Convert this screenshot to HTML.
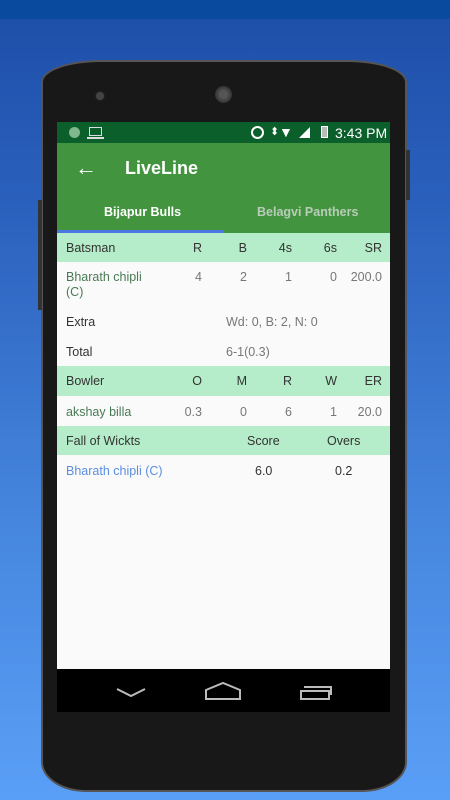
<!DOCTYPE html>
<html><head><style>
*{margin:0;padding:0;box-sizing:border-box}
body{width:450px;height:800px;overflow:hidden;position:relative;font-family:"Liberation Sans",sans-serif;background:linear-gradient(#1d4ea8 0px,#2a60bd 200px,#4484dd 500px,#5a9ff7 800px)}
.top{position:absolute;left:0;top:0;width:450px;height:19px;background:#0a4a9e}
.phone{position:absolute;left:41px;top:60px;width:366px;height:732px;background:#181818;border:2px solid #555;border-radius:60px 60px 45px 45px/22px 22px 30px 30px}
.screen{position:absolute;left:57px;top:122px;width:333px;height:590px;background:#fafafa;overflow:hidden}
.abs{position:absolute}
.row{position:absolute;left:0;width:333px;font-size:12.5px;color:#333}
.hd{background:#b5ecc9}
.g{color:#4a7a55}
.c{position:absolute;text-align:right}
</style></head><body>
<div class="top"></div>
<div class="phone"></div>
<div class="abs" style="left:95px;top:91px;width:10px;height:10px;border-radius:50%;background:#444;border:1px solid #222"></div>
<div class="abs" style="left:215px;top:86px;width:17px;height:17px;border-radius:50%;background:radial-gradient(#555 30%,#333 70%)"></div>
<div class="abs" style="left:406px;top:150px;width:4px;height:50px;background:#333"></div>
<div class="abs" style="left:38px;top:200px;width:4px;height:110px;background:#333"></div>
<div class="screen">
 <div class="abs" style="left:0;top:0;width:333px;height:21px;background:#0b5f2a"></div>
 <div class="abs" style="left:12px;top:5px;width:11px;height:11px;border-radius:50%;background:#7fb88a"></div>
 <div class="abs" style="left:32px;top:5px;width:13px;height:9px;border:1.5px solid #ddd"></div>
 <div class="abs" style="left:30px;top:15px;width:17px;height:1.5px;background:#ddd"></div>
 <div class="abs" style="left:194px;top:4px;width:13px;height:13px;border-radius:50%;border:2px solid #fff"></div>
 <div class="abs" style="left:213px;top:3px;color:#fff;font-size:11px">⬍</div>
 <div class="abs" style="left:222px;top:2px;color:#fff;font-size:14px">▼</div>
 <div class="abs" style="left:242px;top:5px;width:0;height:0;border-left:11px solid transparent;border-bottom:11px solid #fff"></div>
 <div class="abs" style="left:264px;top:4px;width:7px;height:12px;background:#bbb;border:1px solid #fff"></div>
 <div class="abs" style="left:278px;top:3px;color:#fff;font-size:14px">3:43 PM</div>
 <div class="abs" style="left:0;top:21px;width:333px;height:91px;background:#43943f"></div>
 <div class="abs" style="left:18px;top:33px;color:#fff;font-size:22px">←</div>
 <div class="abs" style="left:68px;top:36px;color:#fff;font-size:18px;font-weight:bold">LiveLine</div>
 <div class="abs" style="left:47px;top:83px;color:#fff;font-size:12.5px;font-weight:bold">Bijapur Bulls</div>
 <div class="abs" style="left:200px;top:83px;color:#b9ccb9;font-size:12.5px;font-weight:bold">Belagvi Panthers</div>
 <div class="abs" style="left:0;top:108px;width:167px;height:3px;background:#4a78e0"></div>

 <div class="row hd" style="top:111px;height:29px"><span class="abs" style="left:9px;top:8px">Batsman</span><span class="c" style="right:188px;top:8px">R</span><span class="c" style="right:143px;top:8px">B</span><span class="c" style="right:98px;top:8px">4s</span><span class="c" style="right:53px;top:8px">6s</span><span class="c" style="right:8px;top:8px">SR</span></div>
 <div class="row" style="top:140px;height:44px;color:#777"><span class="abs g" style="left:9px;top:8px;line-height:15px">Bharath chipli<br>(C)</span><span class="c" style="right:188px;top:8px">4</span><span class="c" style="right:143px;top:8px">2</span><span class="c" style="right:98px;top:8px">1</span><span class="c" style="right:53px;top:8px">0</span><span class="c" style="right:8px;top:8px">200.0</span></div>
 <div class="row" style="top:184px;height:30px"><span class="abs" style="left:9px;top:9px">Extra</span><span class="abs" style="left:169px;top:9px;color:#777">Wd: 0, B: 2, N: 0</span></div>
 <div class="row" style="top:214px;height:30px"><span class="abs" style="left:9px;top:9px">Total</span><span class="abs" style="left:169px;top:9px;color:#777">6-1(0.3)</span></div>
 <div class="row hd" style="top:244px;height:30px"><span class="abs" style="left:9px;top:8px">Bowler</span><span class="c" style="right:188px;top:8px">O</span><span class="c" style="right:143px;top:8px">M</span><span class="c" style="right:98px;top:8px">R</span><span class="c" style="right:53px;top:8px">W</span><span class="c" style="right:8px;top:8px">ER</span></div>
 <div class="row" style="top:274px;height:30px;color:#777"><span class="abs g" style="left:9px;top:9px">akshay billa</span><span class="c" style="right:188px;top:9px">0.3</span><span class="c" style="right:143px;top:9px">0</span><span class="c" style="right:98px;top:9px">6</span><span class="c" style="right:53px;top:9px">1</span><span class="c" style="right:8px;top:9px">20.0</span></div>
 <div class="row hd" style="top:304px;height:29px"><span class="abs" style="left:9px;top:8px">Fall of Wickts</span><span class="abs" style="left:190px;top:8px">Score</span><span class="abs" style="left:270px;top:8px">Overs</span></div>
 <div class="row" style="top:333px;height:30px"><span class="abs" style="left:9px;top:9px;color:#5b8ee0">Bharath chipli (C)</span><span class="abs" style="left:198px;top:9px">6.0</span><span class="abs" style="left:278px;top:9px">0.2</span></div>
 <div class="abs" style="left:0;top:547px;width:333px;height:43px;background:#000"></div>
</div>
<svg class="abs" style="left:110px;top:680px" width="240" height="25" viewBox="0 0 240 25">
 <path d="M7 9 L21 16 L35 9" stroke="#bbb" stroke-width="2" fill="none"/>
 <path d="M96 19 L96 10 L113 3 L130 10 L130 19 Z" stroke="#bbb" stroke-width="2" fill="none"/>
 <rect x="191" y="11" width="28" height="8" stroke="#bbb" stroke-width="2" fill="none"/>
 <path d="M194 7 L221 7 L221 15" stroke="#bbb" stroke-width="2" fill="none"/>
</svg>
</body></html>
